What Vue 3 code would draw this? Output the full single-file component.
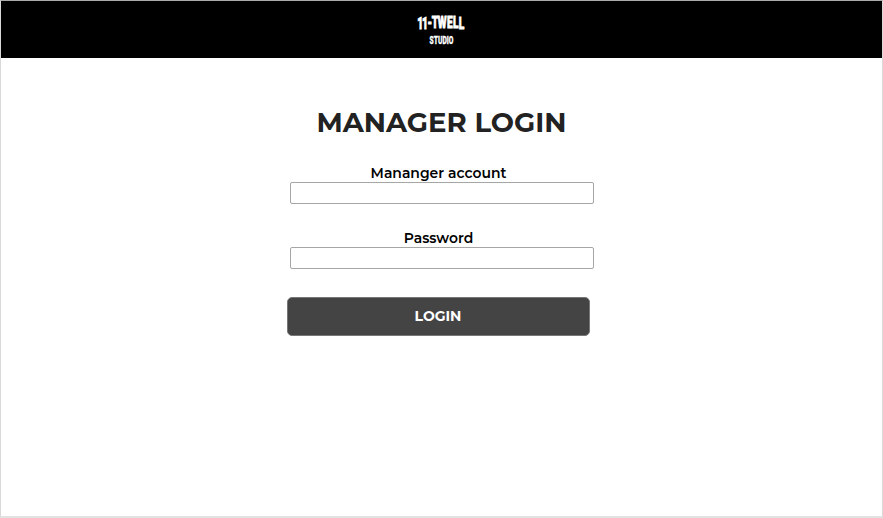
<script setup>
import { ref } from 'vue'
const account = ref('')
const password = ref('')
</script>

<template>
  <div class="page">
    <header class="bar">
      <svg class="logo" width="61" height="44" viewBox="0 0 61 44" role="img">
        <g fill="#fff" stroke="#fff" font-family="Roboto, sans-serif" font-weight="900" transform="scale(.6 1)">
          <text x="10.6 18.4 27.4 34.4 44.4 60.2 70.2 79.8" y="21.8 21.7 21 20.7 20.7 21 21.4 21.8" font-size="17" stroke-width=".8">11-TWELL</text>
          <text x="31" y="37.5" font-size="11" stroke-width=".3" textLength="39.5" lengthAdjust="spacingAndGlyphs">STUDIO</text>
        </g>
      </svg>
    </header>
    <main class="content">
      <h1 class="title">MANAGER LOGIN</h1>
      <form class="form" @submit.prevent>
        <label class="field">
          <span class="label">Mananger account</span>
          <input v-model="account" type="text" />
        </label>
        <label class="field">
          <span class="label">Password</span>
          <input v-model="password" type="password" />
        </label>
        <button class="login" type="submit">LOGIN</button>
      </form>
    </main>
  </div>
</template>

<style>
body { background: #fff; }
</style>
<style scoped>
.page { box-sizing: border-box; width: 883px; height: 518px; border: 1px solid #d9d9d9; border-top-color: #aaa; border-bottom: 2px solid #e2e2e2; font-family: Montserrat, Inter, sans-serif; }
.logo { display: block; overflow: visible; }
.bar { height: 57px; background: #000; display: flex; justify-content: center; padding-top: 6px; box-sizing: border-box; }
.content { display: flex; flex-direction: column; align-items: center; padding-top: 47px; }
.title { margin: 0; height: 34px; line-height: 34px; font-size: 27.5px; font-weight: 700; color: #222; white-space: nowrap; }
.form { width: 304px; padding-top: 26px; }
.field { display: flex; flex-direction: column; height: 65px; }
.label { align-self: center; height: 17px; line-height: 17px; margin-right: 6px; font-size: 13.95px; font-weight: 600; color: #000; white-space: nowrap; }
input { box-sizing: border-box; width: 304px; height: 22px; border: 1px solid #a6a6a6; border-radius: 2px; padding: 1px 2px; background: #fff; }
.login { display: block; box-sizing: border-box; width: 303px; height: 39px; margin: 2px 0 0 -3px; padding: 0; border: 1px solid #777; border-radius: 5px; background: #444; color: #fff; font: 700 14px/37px Montserrat, Inter, sans-serif; }
</style>
